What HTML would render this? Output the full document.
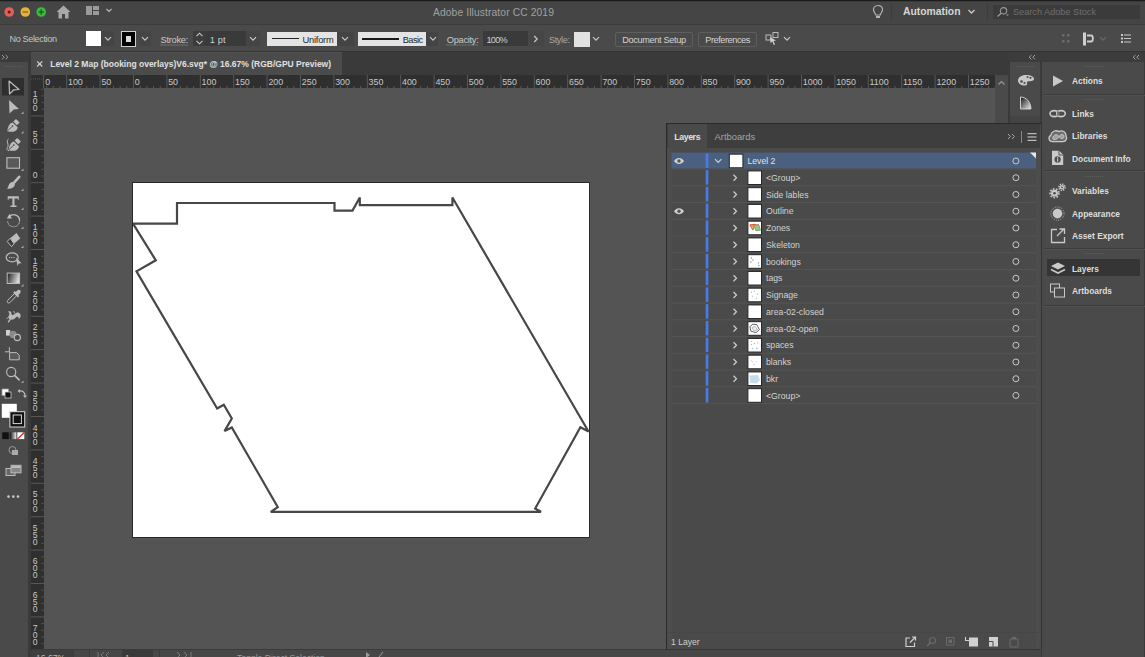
<!DOCTYPE html><html><head><meta charset="utf-8"><style>
*{margin:0;padding:0;box-sizing:border-box}
html,body{width:1145px;height:657px;overflow:hidden;background:#3b3b3b;font-family:"Liberation Sans",sans-serif}
#r{position:relative;width:1145px;height:657px;overflow:hidden}
#r div,#r svg{position:absolute}
</style></head><body><div id="r">
<div style="left:0px;top:0px;width:1145px;height:24px;background:#454545;"></div>
<div style="left:0px;top:0px;width:1145px;height:1px;background:#1c1c1c;"></div>
<div style="left:0px;top:1px;width:1145px;height:1px;background:#3a3a3a;"></div>
<div style="left:0px;top:23.5px;width:1145px;height:1px;background:#3c3c3c;"></div>
<svg style="left:0;top:0" width="60" height="24"><circle cx="9.2" cy="12" r="4.8" fill="#e2605a"/><circle cx="9.2" cy="12" r="1.6" fill="#6a1a18"/><circle cx="25.3" cy="12" r="4.8" fill="#e6b13e"/><rect x="22.6" y="11.4" width="5.4" height="1.2" fill="#8a5a10"/><circle cx="41.2" cy="12" r="4.8" fill="#3cba3f"/><rect x="38.5" y="11.4" width="5.4" height="1.2" fill="#0f5a12"/><rect x="40.6" y="9.3" width="1.2" height="5.4" fill="#0f5a12"/></svg>
<svg style="left:55px;top:4px" width="18" height="16"><path d="M1.5 8 L8.5 1.5 L15.5 8 L13.5 8 L13.5 14.5 L10 14.5 L10 10 L7 10 L7 14.5 L3.5 14.5 L3.5 8 Z" fill="#a8a8a8"/></svg>
<svg style="left:85px;top:5px" width="30" height="12"><rect x="1" y="1" width="6" height="9" fill="#9a9a9a"/><rect x="8" y="1" width="6" height="4" fill="#9a9a9a"/><rect x="8" y="6" width="6" height="4" fill="#9a9a9a"/><path d="M21.5 4 L24 6.5 L26.5 4" stroke="#bbb" stroke-width="1.1" fill="none"/></svg>
<svg style="left:871px;top:4px" width="14" height="16"><path d="M7 1.5 C4 1.5 2.5 3.6 2.5 5.8 C2.5 8 4.3 9.2 4.8 11 L9.2 11 C9.7 9.2 11.5 8 11.5 5.8 C11.5 3.6 10 1.5 7 1.5 Z" stroke="#b5b5b5" stroke-width="1.2" fill="none"/><rect x="5" y="12" width="4" height="2" fill="#b5b5b5"/></svg>
<div style="left:891px;top:3px;width:1px;height:18px;background:#3d3d3d;"></div>
<svg style="left:967px;top:8px" width="10" height="8"><path d="M1.5 2 L4.5 5 L7.5 2" stroke="#ccc" stroke-width="1.3" fill="none"/></svg>
<div style="left:987px;top:3px;width:1px;height:18px;background:#3d3d3d;"></div>
<div style="left:993px;top:5px;width:147px;height:14px;background:#3b3b3b;"></div>
<svg style="left:995px;top:6px" width="16" height="12"><circle cx="8.5" cy="4.8" r="3.2" stroke="#9a9a9a" stroke-width="1.1" fill="none"/><path d="M6.2 7.2 L2.5 10.5" stroke="#9a9a9a" stroke-width="1.3"/><path d="M11 8.5 L14 8.5 L12.5 10 Z" fill="#9a9a9a"/></svg>
<div style="left:0px;top:24.5px;width:1145px;height:27.5px;background:#4a4a4a;"></div>
<div style="left:0px;top:51px;width:1145px;height:1px;background:#343434;"></div>
<div style="left:86px;top:31px;width:15px;height:15px;background:#ffffff;"></div>
<div style="left:101px;top:31px;width:13px;height:15px;background:#454545;"></div>
<svg style="left:104px;top:35.8px" width="8" height="6"><path d="M1 1.2 L4 4.2 L7 1.2" stroke="#c8c8c8" stroke-width="1.2" fill="none"/></svg>
<div style="left:120.5px;top:31px;width:15.5px;height:15.5px;background:#000;border:1px solid #d0d0d0"></div>
<div style="left:125.5px;top:36px;width:5.5px;height:5.5px;background:#ddd;"></div>
<div style="left:138.5px;top:31px;width:12px;height:15px;background:#454545;"></div>
<svg style="left:140.5px;top:35.8px" width="8" height="6"><path d="M1 1.2 L4 4.2 L7 1.2" stroke="#c8c8c8" stroke-width="1.2" fill="none"/></svg>
<svg style="left:160px;top:43.5px" width="30" height="2"><path d="M0.5 1 H28" stroke="#9a9a9a" stroke-width="1" stroke-dasharray="1 1"/></svg>
<div style="left:193px;top:31px;width:12.5px;height:15px;background:#3c3c3c;"></div>
<svg style="left:195px;top:31px" width="9" height="15"><path d="M1.5 5.2 L4.5 2.2 L7.5 5.2 M1.5 9.8 L4.5 12.8 L7.5 9.8" stroke="#c8c8c8" stroke-width="1.1" fill="none"/></svg>
<div style="left:205.5px;top:31px;width:40px;height:15px;background:#3a3a3a;"></div>
<div style="left:245.5px;top:31px;width:14.5px;height:15px;background:#454545;"></div>
<svg style="left:249px;top:35.8px" width="8" height="6"><path d="M1 1.2 L4 4.2 L7 1.2" stroke="#c8c8c8" stroke-width="1.2" fill="none"/></svg>
<div style="left:266.6px;top:31.5px;width:70.7px;height:14.5px;background:#e4e4e4;"></div>
<div style="left:271.8px;top:38.3px;width:27px;height:1px;background:#222;"></div>
<div style="left:337.3px;top:31.5px;width:17px;height:14.5px;background:#444;"></div>
<svg style="left:341px;top:35.8px" width="8" height="6"><path d="M1 1.2 L4 4.2 L7 1.2" stroke="#c8c8c8" stroke-width="1.2" fill="none"/></svg>
<div style="left:357.8px;top:31.5px;width:68px;height:14.5px;background:#e4e4e4;"></div>
<div style="left:361.7px;top:37.8px;width:37.2px;height:2px;background:#1a1a1a;"></div>
<div style="left:426px;top:31.5px;width:12px;height:14.5px;background:#444;"></div>
<svg style="left:429px;top:35.8px" width="8" height="6"><path d="M1 1.2 L4 4.2 L7 1.2" stroke="#c8c8c8" stroke-width="1.2" fill="none"/></svg>
<svg style="left:446px;top:43.5px" width="34" height="2"><path d="M0.5 1 H32.5" stroke="#9a9a9a" stroke-width="1" stroke-dasharray="1 1"/></svg>
<div style="left:483.3px;top:31px;width:45.2px;height:15px;background:#3a3a3a;"></div>
<div style="left:528.5px;top:31px;width:15px;height:15px;background:#464646;"></div>
<svg style="left:533px;top:35px" width="6" height="8"><path d="M1.2 1 L4.2 4 L1.2 7" stroke="#c8c8c8" stroke-width="1.2" fill="none"/></svg>
<div style="left:573.8px;top:31.5px;width:16.2px;height:15.5px;background:#e2e2e2;"></div>
<svg style="left:592.4px;top:35.8px" width="8" height="6"><path d="M1 1.2 L4 4.2 L7 1.2" stroke="#c8c8c8" stroke-width="1.2" fill="none"/></svg>
<div style="left:614.8px;top:31.5px;width:78.5px;height:15.5px;background:#4a4a4a;border:1px solid #5e5e5e;border-radius:2px"></div>
<div style="left:698.2px;top:31.5px;width:58.8px;height:15.5px;background:#4a4a4a;border:1px solid #5e5e5e;border-radius:2px"></div>
<svg style="left:765px;top:31px" width="16" height="15"><rect x="1" y="4" width="5" height="5" stroke="#bbb" fill="none"/><rect x="8" y="1.5" width="5" height="5" stroke="#bbb" fill="none"/><path d="M5 6 L11 9.5 L8.5 10 L10 13.5 L8.8 14 L7.4 10.6 L5.5 12 Z" fill="#d0d0d0"/></svg>
<svg style="left:783px;top:35.8px" width="8" height="6"><path d="M1 1.2 L4 4.2 L7 1.2" stroke="#c8c8c8" stroke-width="1.2" fill="none"/></svg>
<svg style="left:1061px;top:33px" width="10" height="11"><rect x="1" y="1" width="2.5" height="2.5" fill="#6a6a6a"/><rect x="6" y="1" width="2.5" height="2.5" fill="#6a6a6a"/><rect x="1" y="7" width="2.5" height="2.5" fill="#6a6a6a"/><rect x="6" y="7" width="2.5" height="2.5" fill="#6a6a6a"/></svg>
<svg style="left:1081px;top:31px" width="16" height="16"><rect x="2" y="1.5" width="3" height="13" fill="#cfcfcf"/><path d="M6 4.5 L10 4.5 C12.5 4.5 12.5 10.5 10 10.5 L6 10.5" stroke="#cfcfcf" stroke-width="1.8" fill="none"/></svg>
<svg style="left:1099px;top:36.3px" width="8" height="6"><path d="M1 1.2 L4 4.2 L7 1.2" stroke="#6a6a6a" stroke-width="1.2" fill="none"/></svg>
<svg style="left:1120px;top:33px" width="12" height="12"><rect x="1" y="1" width="2" height="2" fill="#c8c8c8"/><rect x="4" y="1.5" width="7" height="1" fill="#c8c8c8"/><rect x="1" y="4.5" width="2" height="2" fill="#c8c8c8"/><rect x="4" y="5" width="7" height="1" fill="#c8c8c8"/><rect x="1" y="8" width="2" height="2" fill="#c8c8c8"/><rect x="4" y="8.5" width="7" height="1" fill="#c8c8c8"/></svg>
<div style="left:0px;top:52px;width:1145px;height:605px;background:#3a3a3a;"></div>
<div style="left:0px;top:52px;width:28px;height:10px;background:#3b3b3b;"></div>
<svg style="left:1px;top:54px" width="10" height="7"><path d="M1 1 L3.2 3.2 L1 5.4 M4.6 1 L6.8 3.2 L4.6 5.4" stroke="#a0a0a0" stroke-width="1" fill="none"/></svg>
<div style="left:0px;top:62px;width:28px;height:595px;background:#4a4a4a;"></div>
<div style="left:28px;top:52px;width:3px;height:605px;background:#3a3a3a;"></div>
<svg style="left:5px;top:65px" width="17" height="3"><path d="M0 1.5 H17" stroke="#5e5e5e" stroke-width="1" stroke-dasharray="1 1"/></svg>
<svg style="left:0;top:0" width="28" height="657"><rect x="2" y="78" width="22" height="17.5" fill="#2e2e2e"/><path d="M9 81 L19 89.5 L13.8 89.8 L9.5 94 Z" fill="none" stroke="#bcbcbc" stroke-width="1.2" stroke-linejoin="round"/><path d="M9 100 L19 109 L13.8 109.6 L9.5 113.5 Z" fill="#bcbcbc"/><path d="M21 114 L23.5 111.5 L23.5 114 Z" fill="#aaa"/><g transform="translate(0,0)"><path d="M13.3 121.6 L16 118.9 L19.6 122.5 L16.9 125.2 Z" fill="#bcbcbc"/><path d="M7.2 131.3 C7.8 128 8.6 125.5 10.3 123.6 L12.6 122.4 L17.8 127.6 L16.6 129.9 C14.7 131.6 12.2 132.4 7.2 131.3 Z" fill="#bcbcbc"/><path d="M7.6 130.9 L11.6 126.9" stroke="#4a4a4a" stroke-width="0.9"/><circle cx="12.4" cy="126.1" r="0.9" fill="#4a4a4a"/></g><path d="M21 133.5 L23.5 131.0 L23.5 133.5 Z" fill="#aaa"/><g transform="translate(1.3,19)"><path d="M13.3 121.6 L16 118.9 L19.6 122.5 L16.9 125.2 Z" fill="#bcbcbc"/><path d="M7.2 131.3 C7.8 128 8.6 125.5 10.3 123.6 L12.6 122.4 L17.8 127.6 L16.6 129.9 C14.7 131.6 12.2 132.4 7.2 131.3 Z" fill="#bcbcbc"/><path d="M7.6 130.9 L11.6 126.9" stroke="#4a4a4a" stroke-width="0.9"/><circle cx="12.4" cy="126.1" r="0.9" fill="#4a4a4a"/></g><path d="M8.5 139 C5.5 141 9.5 144.5 7.5 147.5 C6.5 149 7 150.5 9 150.5" stroke="#bcbcbc" stroke-width="1" fill="none"/><rect x="6.9" y="157.7" width="12.6" height="10.5" fill="#5a5a5a" stroke="#bcbcbc" stroke-width="1.1"/><path d="M21 171 L23.5 168.5 L23.5 171 Z" fill="#aaa"/><path d="M19.2 176.8 L14.3 182.3" stroke="#bcbcbc" stroke-width="2.6" stroke-linecap="round"/><path d="M13.6 182 C11 181.6 9.2 183.4 8.7 185.3 C8.3 186.8 7.8 187.9 7 188.8 C10 188.9 12.9 188.1 14.3 186.2 C15.3 184.8 15.1 182.9 13.6 182 Z" fill="#bcbcbc"/><path d="M21 191 L23.5 188.5 L23.5 191 Z" fill="#aaa"/><path d="M7.7 196.3 H18.8 V199.8 H17.8 V198.4 H14.5 V205.5 H16.5 V207 H10.5 V205.5 H12.4 V198.4 H8.7 V199.8 H7.7 Z" fill="#bcbcbc"/><path d="M21 210 L23.5 207.5 L23.5 210 Z" fill="#aaa"/><path d="M9.3 216.5 A6 6 0 0 1 19.6 220.5" fill="none" stroke="#bcbcbc" stroke-width="1.4"/><path d="M19.6 220.5 A6 6 0 0 1 7.6 221" fill="none" stroke="#bcbcbc" stroke-width="1.1" stroke-dasharray="1.2 0.9"/><path d="M6.8 218.6 L9.6 213.8 L11.8 218.4 Z" fill="#bcbcbc"/><path d="M21 229 L23.5 226.5 L23.5 229 Z" fill="#aaa"/><path d="M10.2 238.2 L16.5 233 L20.2 238.6 L14 243.8 Z" fill="#bcbcbc"/><path d="M10.2 238.2 L14 243.8 L11.6 246.6 L7.2 241.5 Z" fill="#3a3a3a" stroke="#bcbcbc" stroke-width="1"/><path d="M21 248 L23.5 245.5 L23.5 248 Z" fill="#aaa"/><ellipse cx="12.2" cy="257.4" rx="6" ry="4.5" fill="none" stroke="#bcbcbc" stroke-width="1.2"/><path d="M9 257.6 H15" stroke="#bcbcbc" stroke-width="1" stroke-dasharray="1 0.8"/><path d="M16 257.5 L21.5 263.2 L18.7 263.4 L17.4 266 Z" fill="#bcbcbc"/><defs><linearGradient id="g1" x1="0" y1="0" x2="1" y2="0.3"><stop offset="0" stop-color="#1a1a1a"/><stop offset="1" stop-color="#d8d8d8"/></linearGradient><linearGradient id="g2" x1="0" y1="0" x2="1" y2="0"><stop offset="0" stop-color="#111"/><stop offset="1" stop-color="#eee"/></linearGradient></defs><rect x="7.2" y="273.1" width="12.4" height="10.4" fill="url(#g1)" stroke="#bcbcbc" stroke-width="1"/><path d="M21 286.5 L23.5 284.0 L23.5 286.5 Z" fill="#aaa"/><path d="M7.6 302.6 C7 301.5 7.3 300.8 8 300 L14.4 293.6 L16.6 295.8 L10.2 302.2 C9.4 302.9 8.6 303.2 7.6 302.6 Z" fill="none" stroke="#bcbcbc" stroke-width="1"/><path d="M13.2 292.5 L14.6 291.1 L15.6 292.1 L17.2 290.5 C18.2 289.5 19.8 289.6 20.4 290.6 C21 291.5 20.8 292.8 19.9 293.6 L18.4 295.1 L19.3 296 L17.9 297.4 Z" fill="#bcbcbc"/><path d="M8 311.5 C9.8 310.6 11.6 311.4 11.4 313.2 C11.2 314.6 12.6 315.6 14 314.6 L16.2 313 C18.4 311.8 20.8 313.4 20.6 316 C20.4 317.6 19.6 318.8 18.4 318.6 C18.8 316.6 17.6 315.8 16.4 317 C14.8 318.8 13 320 11 319.6 L8.6 322.8 L7.6 322 L9.6 319 C8.4 318 8 316.4 9 315.2 C9.8 314.2 9.6 312.8 8 311.5 Z" fill="#bcbcbc"/><path d="M13.5 311 L15 313.5 M6.5 318.5 L12 316" stroke="#bcbcbc" stroke-width="0.9"/><rect x="6" y="330" width="4.2" height="5.6" fill="#d0d0d0"/><circle cx="13" cy="334.4" r="3.6" fill="#8a8a8a"/><circle cx="17.3" cy="337.5" r="3.1" fill="#4a4a4a" stroke="#bcbcbc" stroke-width="1.2"/><path d="M9.6 352.6 H16.6 L19.2 355.2 V359.8 H9.6 Z" fill="#5a5a5a" stroke="#bcbcbc" stroke-width="1"/><path d="M9.4 347.2 V352 M5 351.8 H9.6" stroke="#bcbcbc" stroke-width="1"/><circle cx="11.2" cy="372" r="4.6" fill="none" stroke="#bcbcbc" stroke-width="1.1"/><path d="M14.6 375.4 L19.6 380.4" stroke="#bcbcbc" stroke-width="1.6"/><path d="M21 383 L23.5 380.5 L23.5 383 Z" fill="#aaa"/><rect x="2" y="389" width="6.5" height="6.5" fill="#fff" stroke="#999" stroke-width="0.8"/><rect x="5" y="392" width="6" height="6" fill="#111" stroke="#ccc" stroke-width="0.8"/><path d="M19 391 C23 390.5 25 392.5 25 396" stroke="#bcbcbc" stroke-width="1.1" fill="none"/><path d="M17.5 391 L20 389 L20 393 Z M23 395.5 L27 395.5 L25 398 Z" fill="#bcbcbc"/><rect x="1.8" y="403.8" width="15" height="14" fill="#fff"/><rect x="9.9" y="411.7" width="14.8" height="15.3" fill="#111" stroke="#d8d8d8" stroke-width="1"/><rect x="13.2" y="415" width="8.2" height="8.6" fill="none" stroke="#d8d8d8" stroke-width="1"/><rect x="2.3" y="432.3" width="6.5" height="6.8" fill="#111"/><rect x="9.8" y="432.3" width="6.5" height="6.8" fill="url(#g2)"/><rect x="17.3" y="432.3" width="7" height="6.8" fill="#fff"/><path d="M17.5 439 L24.2 432.5" stroke="#e02020" stroke-width="1.3"/><circle cx="12.5" cy="450" r="3.5" fill="none" stroke="#999" stroke-width="1"/><rect x="12" y="450" width="6" height="5" fill="#aaa"/><rect x="6" y="468.5" width="9" height="7" fill="#666" stroke="#bcbcbc" stroke-width="1"/><rect x="11" y="465.3" width="10" height="7.5" fill="#888" stroke="#bcbcbc" stroke-width="1"/><rect x="11.5" y="466" width="9" height="2" fill="#bcbcbc"/><circle cx="8.5" cy="496.6" r="1.3" fill="#c8c8c8"/><circle cx="13.3" cy="496.6" r="1.3" fill="#c8c8c8"/><circle cx="18" cy="496.6" r="1.3" fill="#c8c8c8"/></svg>
<div style="left:31px;top:52.4px;width:311px;height:22.2px;background:#4b4b4b;border-top:1px solid #525252"></div>
<svg style="left:36px;top:60px" width="8" height="8"><path d="M1.1 1.3 L6.3 6.5 M6.3 1.3 L1.1 6.5" stroke="#d8d8d8" stroke-width="1.1"/></svg>
<div style="left:31px;top:75px;width:964px;height:13px;background:#2f2f2f;"></div>
<div style="left:31px;top:88px;width:13px;height:561px;background:#2f2f2f;"></div>
<svg style="left:31px;top:75px" width="964" height="13" font-family="Liberation Sans, sans-serif"><rect x="1.80" y="0" width="1" height="13" fill="#575757"/><text x="14.20" y="10" font-size="8.9" fill="#c9c9c9">0</text><rect x="8.48" y="11" width="1" height="2" fill="#5a5a5a"/><rect x="15.16" y="11" width="1" height="2" fill="#5a5a5a"/><rect x="21.84" y="11" width="1" height="2" fill="#5a5a5a"/><rect x="28.52" y="11" width="1" height="2" fill="#5a5a5a"/><rect x="35.20" y="0" width="1" height="13" fill="#575757"/><text x="37.00" y="10" font-size="8.9" fill="#c9c9c9">100</text><rect x="41.88" y="11" width="1" height="2" fill="#5a5a5a"/><rect x="48.56" y="11" width="1" height="2" fill="#5a5a5a"/><rect x="55.24" y="11" width="1" height="2" fill="#5a5a5a"/><rect x="61.92" y="11" width="1" height="2" fill="#5a5a5a"/><rect x="68.60" y="0" width="1" height="13" fill="#575757"/><text x="70.40" y="10" font-size="8.9" fill="#c9c9c9">50</text><rect x="75.28" y="11" width="1" height="2" fill="#5a5a5a"/><rect x="81.96" y="11" width="1" height="2" fill="#5a5a5a"/><rect x="88.64" y="11" width="1" height="2" fill="#5a5a5a"/><rect x="95.32" y="11" width="1" height="2" fill="#5a5a5a"/><rect x="102.00" y="0" width="1" height="13" fill="#575757"/><text x="103.80" y="10" font-size="8.9" fill="#c9c9c9">0</text><rect x="108.68" y="11" width="1" height="2" fill="#5a5a5a"/><rect x="115.36" y="11" width="1" height="2" fill="#5a5a5a"/><rect x="122.04" y="11" width="1" height="2" fill="#5a5a5a"/><rect x="128.72" y="11" width="1" height="2" fill="#5a5a5a"/><rect x="135.40" y="0" width="1" height="13" fill="#575757"/><text x="137.20" y="10" font-size="8.9" fill="#c9c9c9">50</text><rect x="142.08" y="11" width="1" height="2" fill="#5a5a5a"/><rect x="148.76" y="11" width="1" height="2" fill="#5a5a5a"/><rect x="155.44" y="11" width="1" height="2" fill="#5a5a5a"/><rect x="162.12" y="11" width="1" height="2" fill="#5a5a5a"/><rect x="168.80" y="0" width="1" height="13" fill="#575757"/><text x="170.60" y="10" font-size="8.9" fill="#c9c9c9">100</text><rect x="175.48" y="11" width="1" height="2" fill="#5a5a5a"/><rect x="182.16" y="11" width="1" height="2" fill="#5a5a5a"/><rect x="188.84" y="11" width="1" height="2" fill="#5a5a5a"/><rect x="195.52" y="11" width="1" height="2" fill="#5a5a5a"/><rect x="202.20" y="0" width="1" height="13" fill="#575757"/><text x="204.00" y="10" font-size="8.9" fill="#c9c9c9">150</text><rect x="208.88" y="11" width="1" height="2" fill="#5a5a5a"/><rect x="215.56" y="11" width="1" height="2" fill="#5a5a5a"/><rect x="222.24" y="11" width="1" height="2" fill="#5a5a5a"/><rect x="228.92" y="11" width="1" height="2" fill="#5a5a5a"/><rect x="235.60" y="0" width="1" height="13" fill="#575757"/><text x="237.40" y="10" font-size="8.9" fill="#c9c9c9">200</text><rect x="242.28" y="11" width="1" height="2" fill="#5a5a5a"/><rect x="248.96" y="11" width="1" height="2" fill="#5a5a5a"/><rect x="255.64" y="11" width="1" height="2" fill="#5a5a5a"/><rect x="262.32" y="11" width="1" height="2" fill="#5a5a5a"/><rect x="269.00" y="0" width="1" height="13" fill="#575757"/><text x="270.80" y="10" font-size="8.9" fill="#c9c9c9">250</text><rect x="275.68" y="11" width="1" height="2" fill="#5a5a5a"/><rect x="282.36" y="11" width="1" height="2" fill="#5a5a5a"/><rect x="289.04" y="11" width="1" height="2" fill="#5a5a5a"/><rect x="295.72" y="11" width="1" height="2" fill="#5a5a5a"/><rect x="302.40" y="0" width="1" height="13" fill="#575757"/><text x="304.20" y="10" font-size="8.9" fill="#c9c9c9">300</text><rect x="309.08" y="11" width="1" height="2" fill="#5a5a5a"/><rect x="315.76" y="11" width="1" height="2" fill="#5a5a5a"/><rect x="322.44" y="11" width="1" height="2" fill="#5a5a5a"/><rect x="329.12" y="11" width="1" height="2" fill="#5a5a5a"/><rect x="335.80" y="0" width="1" height="13" fill="#575757"/><text x="337.60" y="10" font-size="8.9" fill="#c9c9c9">350</text><rect x="342.48" y="11" width="1" height="2" fill="#5a5a5a"/><rect x="349.16" y="11" width="1" height="2" fill="#5a5a5a"/><rect x="355.84" y="11" width="1" height="2" fill="#5a5a5a"/><rect x="362.52" y="11" width="1" height="2" fill="#5a5a5a"/><rect x="369.20" y="0" width="1" height="13" fill="#575757"/><text x="371.00" y="10" font-size="8.9" fill="#c9c9c9">400</text><rect x="375.88" y="11" width="1" height="2" fill="#5a5a5a"/><rect x="382.56" y="11" width="1" height="2" fill="#5a5a5a"/><rect x="389.24" y="11" width="1" height="2" fill="#5a5a5a"/><rect x="395.92" y="11" width="1" height="2" fill="#5a5a5a"/><rect x="402.60" y="0" width="1" height="13" fill="#575757"/><text x="404.40" y="10" font-size="8.9" fill="#c9c9c9">450</text><rect x="409.28" y="11" width="1" height="2" fill="#5a5a5a"/><rect x="415.96" y="11" width="1" height="2" fill="#5a5a5a"/><rect x="422.64" y="11" width="1" height="2" fill="#5a5a5a"/><rect x="429.32" y="11" width="1" height="2" fill="#5a5a5a"/><rect x="436.00" y="0" width="1" height="13" fill="#575757"/><text x="437.80" y="10" font-size="8.9" fill="#c9c9c9">500</text><rect x="442.68" y="11" width="1" height="2" fill="#5a5a5a"/><rect x="449.36" y="11" width="1" height="2" fill="#5a5a5a"/><rect x="456.04" y="11" width="1" height="2" fill="#5a5a5a"/><rect x="462.72" y="11" width="1" height="2" fill="#5a5a5a"/><rect x="469.40" y="0" width="1" height="13" fill="#575757"/><text x="471.20" y="10" font-size="8.9" fill="#c9c9c9">550</text><rect x="476.08" y="11" width="1" height="2" fill="#5a5a5a"/><rect x="482.76" y="11" width="1" height="2" fill="#5a5a5a"/><rect x="489.44" y="11" width="1" height="2" fill="#5a5a5a"/><rect x="496.12" y="11" width="1" height="2" fill="#5a5a5a"/><rect x="502.80" y="0" width="1" height="13" fill="#575757"/><text x="504.60" y="10" font-size="8.9" fill="#c9c9c9">600</text><rect x="509.48" y="11" width="1" height="2" fill="#5a5a5a"/><rect x="516.16" y="11" width="1" height="2" fill="#5a5a5a"/><rect x="522.84" y="11" width="1" height="2" fill="#5a5a5a"/><rect x="529.52" y="11" width="1" height="2" fill="#5a5a5a"/><rect x="536.20" y="0" width="1" height="13" fill="#575757"/><text x="538.00" y="10" font-size="8.9" fill="#c9c9c9">650</text><rect x="542.88" y="11" width="1" height="2" fill="#5a5a5a"/><rect x="549.56" y="11" width="1" height="2" fill="#5a5a5a"/><rect x="556.24" y="11" width="1" height="2" fill="#5a5a5a"/><rect x="562.92" y="11" width="1" height="2" fill="#5a5a5a"/><rect x="569.60" y="0" width="1" height="13" fill="#575757"/><text x="571.40" y="10" font-size="8.9" fill="#c9c9c9">700</text><rect x="576.28" y="11" width="1" height="2" fill="#5a5a5a"/><rect x="582.96" y="11" width="1" height="2" fill="#5a5a5a"/><rect x="589.64" y="11" width="1" height="2" fill="#5a5a5a"/><rect x="596.32" y="11" width="1" height="2" fill="#5a5a5a"/><rect x="603.00" y="0" width="1" height="13" fill="#575757"/><text x="604.80" y="10" font-size="8.9" fill="#c9c9c9">750</text><rect x="609.68" y="11" width="1" height="2" fill="#5a5a5a"/><rect x="616.36" y="11" width="1" height="2" fill="#5a5a5a"/><rect x="623.04" y="11" width="1" height="2" fill="#5a5a5a"/><rect x="629.72" y="11" width="1" height="2" fill="#5a5a5a"/><rect x="636.40" y="0" width="1" height="13" fill="#575757"/><text x="638.20" y="10" font-size="8.9" fill="#c9c9c9">800</text><rect x="643.08" y="11" width="1" height="2" fill="#5a5a5a"/><rect x="649.76" y="11" width="1" height="2" fill="#5a5a5a"/><rect x="656.44" y="11" width="1" height="2" fill="#5a5a5a"/><rect x="663.12" y="11" width="1" height="2" fill="#5a5a5a"/><rect x="669.80" y="0" width="1" height="13" fill="#575757"/><text x="671.60" y="10" font-size="8.9" fill="#c9c9c9">850</text><rect x="676.48" y="11" width="1" height="2" fill="#5a5a5a"/><rect x="683.16" y="11" width="1" height="2" fill="#5a5a5a"/><rect x="689.84" y="11" width="1" height="2" fill="#5a5a5a"/><rect x="696.52" y="11" width="1" height="2" fill="#5a5a5a"/><rect x="703.20" y="0" width="1" height="13" fill="#575757"/><text x="705.00" y="10" font-size="8.9" fill="#c9c9c9">900</text><rect x="709.88" y="11" width="1" height="2" fill="#5a5a5a"/><rect x="716.56" y="11" width="1" height="2" fill="#5a5a5a"/><rect x="723.24" y="11" width="1" height="2" fill="#5a5a5a"/><rect x="729.92" y="11" width="1" height="2" fill="#5a5a5a"/><rect x="736.60" y="0" width="1" height="13" fill="#575757"/><text x="738.40" y="10" font-size="8.9" fill="#c9c9c9">950</text><rect x="743.28" y="11" width="1" height="2" fill="#5a5a5a"/><rect x="749.96" y="11" width="1" height="2" fill="#5a5a5a"/><rect x="756.64" y="11" width="1" height="2" fill="#5a5a5a"/><rect x="763.32" y="11" width="1" height="2" fill="#5a5a5a"/><rect x="770.00" y="0" width="1" height="13" fill="#575757"/><text x="771.80" y="10" font-size="8.9" fill="#c9c9c9">1000</text><rect x="776.68" y="11" width="1" height="2" fill="#5a5a5a"/><rect x="783.36" y="11" width="1" height="2" fill="#5a5a5a"/><rect x="790.04" y="11" width="1" height="2" fill="#5a5a5a"/><rect x="796.72" y="11" width="1" height="2" fill="#5a5a5a"/><rect x="803.40" y="0" width="1" height="13" fill="#575757"/><text x="805.20" y="10" font-size="8.9" fill="#c9c9c9">1050</text><rect x="810.08" y="11" width="1" height="2" fill="#5a5a5a"/><rect x="816.76" y="11" width="1" height="2" fill="#5a5a5a"/><rect x="823.44" y="11" width="1" height="2" fill="#5a5a5a"/><rect x="830.12" y="11" width="1" height="2" fill="#5a5a5a"/><rect x="836.80" y="0" width="1" height="13" fill="#575757"/><text x="838.60" y="10" font-size="8.9" fill="#c9c9c9">1100</text><rect x="843.48" y="11" width="1" height="2" fill="#5a5a5a"/><rect x="850.16" y="11" width="1" height="2" fill="#5a5a5a"/><rect x="856.84" y="11" width="1" height="2" fill="#5a5a5a"/><rect x="863.52" y="11" width="1" height="2" fill="#5a5a5a"/><rect x="870.20" y="0" width="1" height="13" fill="#575757"/><text x="872.00" y="10" font-size="8.9" fill="#c9c9c9">1150</text><rect x="876.88" y="11" width="1" height="2" fill="#5a5a5a"/><rect x="883.56" y="11" width="1" height="2" fill="#5a5a5a"/><rect x="890.24" y="11" width="1" height="2" fill="#5a5a5a"/><rect x="896.92" y="11" width="1" height="2" fill="#5a5a5a"/><rect x="903.60" y="0" width="1" height="13" fill="#575757"/><text x="905.40" y="10" font-size="8.9" fill="#c9c9c9">1200</text><rect x="910.28" y="11" width="1" height="2" fill="#5a5a5a"/><rect x="916.96" y="11" width="1" height="2" fill="#5a5a5a"/><rect x="923.64" y="11" width="1" height="2" fill="#5a5a5a"/><rect x="930.32" y="11" width="1" height="2" fill="#5a5a5a"/><rect x="937.00" y="0" width="1" height="13" fill="#575757"/><text x="938.80" y="10" font-size="8.9" fill="#c9c9c9">1250</text><rect x="943.68" y="11" width="1" height="2" fill="#5a5a5a"/><rect x="950.36" y="11" width="1" height="2" fill="#5a5a5a"/><rect x="957.04" y="11" width="1" height="2" fill="#5a5a5a"/><rect x="963.72" y="11" width="1" height="2" fill="#5a5a5a"/></svg>
<svg style="left:31px;top:88px" width="13" height="561" font-family="Liberation Sans, sans-serif"><rect x="0" y="-6.00" width="13" height="1" fill="#575757"/><text x="1.8" y="-24.80" font-size="8.6" fill="#c9c9c9">1</text><text x="1.8" y="-17.70" font-size="8.6" fill="#c9c9c9">5</text><text x="1.8" y="-10.60" font-size="8.6" fill="#c9c9c9">0</text><rect x="10.5" y="0.68" width="2" height="1" fill="#5a5a5a"/><rect x="10.5" y="7.36" width="2" height="1" fill="#5a5a5a"/><rect x="10.5" y="14.04" width="2" height="1" fill="#5a5a5a"/><rect x="10.5" y="20.72" width="2" height="1" fill="#5a5a5a"/><rect x="0" y="27.40" width="13" height="1" fill="#575757"/><text x="1.8" y="8.60" font-size="8.6" fill="#c9c9c9">1</text><text x="1.8" y="15.70" font-size="8.6" fill="#c9c9c9">0</text><text x="1.8" y="22.80" font-size="8.6" fill="#c9c9c9">0</text><rect x="10.5" y="34.08" width="2" height="1" fill="#5a5a5a"/><rect x="10.5" y="40.76" width="2" height="1" fill="#5a5a5a"/><rect x="10.5" y="47.44" width="2" height="1" fill="#5a5a5a"/><rect x="10.5" y="54.12" width="2" height="1" fill="#5a5a5a"/><rect x="0" y="60.80" width="13" height="1" fill="#575757"/><text x="1.8" y="49.10" font-size="8.6" fill="#c9c9c9">5</text><text x="1.8" y="56.20" font-size="8.6" fill="#c9c9c9">0</text><rect x="10.5" y="67.48" width="2" height="1" fill="#5a5a5a"/><rect x="10.5" y="74.16" width="2" height="1" fill="#5a5a5a"/><rect x="10.5" y="80.84" width="2" height="1" fill="#5a5a5a"/><rect x="10.5" y="87.52" width="2" height="1" fill="#5a5a5a"/><rect x="0" y="94.20" width="13" height="1" fill="#575757"/><text x="1.8" y="89.60" font-size="8.6" fill="#c9c9c9">0</text><rect x="10.5" y="100.88" width="2" height="1" fill="#5a5a5a"/><rect x="10.5" y="107.56" width="2" height="1" fill="#5a5a5a"/><rect x="10.5" y="114.24" width="2" height="1" fill="#5a5a5a"/><rect x="10.5" y="120.92" width="2" height="1" fill="#5a5a5a"/><rect x="0" y="127.60" width="13" height="1" fill="#575757"/><text x="1.8" y="115.90" font-size="8.6" fill="#c9c9c9">5</text><text x="1.8" y="123.00" font-size="8.6" fill="#c9c9c9">0</text><rect x="10.5" y="134.28" width="2" height="1" fill="#5a5a5a"/><rect x="10.5" y="140.96" width="2" height="1" fill="#5a5a5a"/><rect x="10.5" y="147.64" width="2" height="1" fill="#5a5a5a"/><rect x="10.5" y="154.32" width="2" height="1" fill="#5a5a5a"/><rect x="0" y="161.00" width="13" height="1" fill="#575757"/><text x="1.8" y="142.20" font-size="8.6" fill="#c9c9c9">1</text><text x="1.8" y="149.30" font-size="8.6" fill="#c9c9c9">0</text><text x="1.8" y="156.40" font-size="8.6" fill="#c9c9c9">0</text><rect x="10.5" y="167.68" width="2" height="1" fill="#5a5a5a"/><rect x="10.5" y="174.36" width="2" height="1" fill="#5a5a5a"/><rect x="10.5" y="181.04" width="2" height="1" fill="#5a5a5a"/><rect x="10.5" y="187.72" width="2" height="1" fill="#5a5a5a"/><rect x="0" y="194.40" width="13" height="1" fill="#575757"/><text x="1.8" y="175.60" font-size="8.6" fill="#c9c9c9">1</text><text x="1.8" y="182.70" font-size="8.6" fill="#c9c9c9">5</text><text x="1.8" y="189.80" font-size="8.6" fill="#c9c9c9">0</text><rect x="10.5" y="201.08" width="2" height="1" fill="#5a5a5a"/><rect x="10.5" y="207.76" width="2" height="1" fill="#5a5a5a"/><rect x="10.5" y="214.44" width="2" height="1" fill="#5a5a5a"/><rect x="10.5" y="221.12" width="2" height="1" fill="#5a5a5a"/><rect x="0" y="227.80" width="13" height="1" fill="#575757"/><text x="1.8" y="209.00" font-size="8.6" fill="#c9c9c9">2</text><text x="1.8" y="216.10" font-size="8.6" fill="#c9c9c9">0</text><text x="1.8" y="223.20" font-size="8.6" fill="#c9c9c9">0</text><rect x="10.5" y="234.48" width="2" height="1" fill="#5a5a5a"/><rect x="10.5" y="241.16" width="2" height="1" fill="#5a5a5a"/><rect x="10.5" y="247.84" width="2" height="1" fill="#5a5a5a"/><rect x="10.5" y="254.52" width="2" height="1" fill="#5a5a5a"/><rect x="0" y="261.20" width="13" height="1" fill="#575757"/><text x="1.8" y="242.40" font-size="8.6" fill="#c9c9c9">2</text><text x="1.8" y="249.50" font-size="8.6" fill="#c9c9c9">5</text><text x="1.8" y="256.60" font-size="8.6" fill="#c9c9c9">0</text><rect x="10.5" y="267.88" width="2" height="1" fill="#5a5a5a"/><rect x="10.5" y="274.56" width="2" height="1" fill="#5a5a5a"/><rect x="10.5" y="281.24" width="2" height="1" fill="#5a5a5a"/><rect x="10.5" y="287.92" width="2" height="1" fill="#5a5a5a"/><rect x="0" y="294.60" width="13" height="1" fill="#575757"/><text x="1.8" y="275.80" font-size="8.6" fill="#c9c9c9">3</text><text x="1.8" y="282.90" font-size="8.6" fill="#c9c9c9">0</text><text x="1.8" y="290.00" font-size="8.6" fill="#c9c9c9">0</text><rect x="10.5" y="301.28" width="2" height="1" fill="#5a5a5a"/><rect x="10.5" y="307.96" width="2" height="1" fill="#5a5a5a"/><rect x="10.5" y="314.64" width="2" height="1" fill="#5a5a5a"/><rect x="10.5" y="321.32" width="2" height="1" fill="#5a5a5a"/><rect x="0" y="328.00" width="13" height="1" fill="#575757"/><text x="1.8" y="309.20" font-size="8.6" fill="#c9c9c9">3</text><text x="1.8" y="316.30" font-size="8.6" fill="#c9c9c9">5</text><text x="1.8" y="323.40" font-size="8.6" fill="#c9c9c9">0</text><rect x="10.5" y="334.68" width="2" height="1" fill="#5a5a5a"/><rect x="10.5" y="341.36" width="2" height="1" fill="#5a5a5a"/><rect x="10.5" y="348.04" width="2" height="1" fill="#5a5a5a"/><rect x="10.5" y="354.72" width="2" height="1" fill="#5a5a5a"/><rect x="0" y="361.40" width="13" height="1" fill="#575757"/><text x="1.8" y="342.60" font-size="8.6" fill="#c9c9c9">4</text><text x="1.8" y="349.70" font-size="8.6" fill="#c9c9c9">0</text><text x="1.8" y="356.80" font-size="8.6" fill="#c9c9c9">0</text><rect x="10.5" y="368.08" width="2" height="1" fill="#5a5a5a"/><rect x="10.5" y="374.76" width="2" height="1" fill="#5a5a5a"/><rect x="10.5" y="381.44" width="2" height="1" fill="#5a5a5a"/><rect x="10.5" y="388.12" width="2" height="1" fill="#5a5a5a"/><rect x="0" y="394.80" width="13" height="1" fill="#575757"/><text x="1.8" y="376.00" font-size="8.6" fill="#c9c9c9">4</text><text x="1.8" y="383.10" font-size="8.6" fill="#c9c9c9">5</text><text x="1.8" y="390.20" font-size="8.6" fill="#c9c9c9">0</text><rect x="10.5" y="401.48" width="2" height="1" fill="#5a5a5a"/><rect x="10.5" y="408.16" width="2" height="1" fill="#5a5a5a"/><rect x="10.5" y="414.84" width="2" height="1" fill="#5a5a5a"/><rect x="10.5" y="421.52" width="2" height="1" fill="#5a5a5a"/><rect x="0" y="428.20" width="13" height="1" fill="#575757"/><text x="1.8" y="409.40" font-size="8.6" fill="#c9c9c9">5</text><text x="1.8" y="416.50" font-size="8.6" fill="#c9c9c9">0</text><text x="1.8" y="423.60" font-size="8.6" fill="#c9c9c9">0</text><rect x="10.5" y="434.88" width="2" height="1" fill="#5a5a5a"/><rect x="10.5" y="441.56" width="2" height="1" fill="#5a5a5a"/><rect x="10.5" y="448.24" width="2" height="1" fill="#5a5a5a"/><rect x="10.5" y="454.92" width="2" height="1" fill="#5a5a5a"/><rect x="0" y="461.60" width="13" height="1" fill="#575757"/><text x="1.8" y="442.80" font-size="8.6" fill="#c9c9c9">5</text><text x="1.8" y="449.90" font-size="8.6" fill="#c9c9c9">5</text><text x="1.8" y="457.00" font-size="8.6" fill="#c9c9c9">0</text><rect x="10.5" y="468.28" width="2" height="1" fill="#5a5a5a"/><rect x="10.5" y="474.96" width="2" height="1" fill="#5a5a5a"/><rect x="10.5" y="481.64" width="2" height="1" fill="#5a5a5a"/><rect x="10.5" y="488.32" width="2" height="1" fill="#5a5a5a"/><rect x="0" y="495.00" width="13" height="1" fill="#575757"/><text x="1.8" y="476.20" font-size="8.6" fill="#c9c9c9">6</text><text x="1.8" y="483.30" font-size="8.6" fill="#c9c9c9">0</text><text x="1.8" y="490.40" font-size="8.6" fill="#c9c9c9">0</text><rect x="10.5" y="501.68" width="2" height="1" fill="#5a5a5a"/><rect x="10.5" y="508.36" width="2" height="1" fill="#5a5a5a"/><rect x="10.5" y="515.04" width="2" height="1" fill="#5a5a5a"/><rect x="10.5" y="521.72" width="2" height="1" fill="#5a5a5a"/><rect x="0" y="528.40" width="13" height="1" fill="#575757"/><text x="1.8" y="509.60" font-size="8.6" fill="#c9c9c9">6</text><text x="1.8" y="516.70" font-size="8.6" fill="#c9c9c9">5</text><text x="1.8" y="523.80" font-size="8.6" fill="#c9c9c9">0</text><rect x="10.5" y="535.08" width="2" height="1" fill="#5a5a5a"/><rect x="10.5" y="541.76" width="2" height="1" fill="#5a5a5a"/><rect x="10.5" y="548.44" width="2" height="1" fill="#5a5a5a"/><rect x="10.5" y="555.12" width="2" height="1" fill="#5a5a5a"/><rect x="0" y="561.80" width="13" height="1" fill="#575757"/><text x="1.8" y="543.00" font-size="8.6" fill="#c9c9c9">7</text><text x="1.8" y="550.10" font-size="8.6" fill="#c9c9c9">0</text><text x="1.8" y="557.20" font-size="8.6" fill="#c9c9c9">0</text><rect x="10.5" y="568.48" width="2" height="1" fill="#5a5a5a"/><rect x="10.5" y="575.16" width="2" height="1" fill="#5a5a5a"/><rect x="10.5" y="581.84" width="2" height="1" fill="#5a5a5a"/><rect x="10.5" y="588.52" width="2" height="1" fill="#5a5a5a"/><rect x="0" y="595.20" width="13" height="1" fill="#575757"/><text x="1.8" y="576.40" font-size="8.6" fill="#c9c9c9">7</text><text x="1.8" y="583.50" font-size="8.6" fill="#c9c9c9">5</text><text x="1.8" y="590.60" font-size="8.6" fill="#c9c9c9">0</text><rect x="10.5" y="601.88" width="2" height="1" fill="#5a5a5a"/><rect x="10.5" y="608.56" width="2" height="1" fill="#5a5a5a"/><rect x="10.5" y="615.24" width="2" height="1" fill="#5a5a5a"/><rect x="10.5" y="621.92" width="2" height="1" fill="#5a5a5a"/></svg>
<div style="left:31px;top:75px;width:13px;height:13px;background:#2f2f2f;"></div>
<div style="left:43px;top:75px;width:1px;height:13px;background:#575757;"></div>
<svg style="left:31px;top:78px" width="13" height="2"><path d="M0 1 H12" stroke="#555" stroke-width="1" stroke-dasharray="1 1"/></svg>
<div style="left:44px;top:88px;width:951px;height:561px;background:#545454;"></div>
<div style="left:995px;top:75px;width:13px;height:574px;background:#4a4a4a;"></div>
<svg style="left:997px;top:80px" width="10" height="6"><path d="M1.5 4.5 L4.5 1.5 L7.5 4.5" stroke="#9a9a9a" stroke-width="1.1" fill="none"/></svg>
<div style="left:31px;top:649px;width:964px;height:8px;background:#474747;"></div>
<div style="left:31px;top:649px;width:964px;height:1px;background:#3a3a3a;"></div>
<div style="left:31px;top:650px;width:42px;height:7px;background:#3f3f3f;"></div>
<div style="left:73px;top:650px;width:1px;height:7px;background:#3a3a3a;"></div>
<div style="left:89px;top:650px;width:1px;height:7px;background:#3a3a3a;"></div>
<svg style="left:95px;top:651px" width="110" height="6"><path d="M3 1 V6 M9 1 L6 4 L9 7 M14 1 L11 4 L14 7" stroke="#7a7a7a" stroke-width="1" fill="none"/><path d="M82 1 L85 4 L82 7 M89 1 L92 4 L89 7 M96 1 V6" stroke="#7a7a7a" stroke-width="1" fill="none"/></svg>
<div style="left:122px;top:650px;width:31px;height:7px;background:#3a3a3a;"></div>
<div style="left:159px;top:650px;width:1px;height:7px;background:#3a3a3a;"></div>
<svg style="left:364px;top:651px" width="24" height="6"><path d="M2 1 L6 4 L2 7 Z" fill="#9a9a9a"/><path d="M15 6 L19 1" stroke="#9a9a9a" stroke-width="1"/></svg>
<div style="left:133px;top:183px;width:456px;height:354px;background:#ffffff;box-shadow:0 0 0 1px #2a2a2a"></div>
<svg style="left:133px;top:183px" width="456" height="354"><path d="M0 40.6 H44 V20 H201.5 V27.6 H219.5 L226.8 14.5 V22.1 H319.4 V14.5 L455.5 248.5 L447.4 244.2 L402.2 325.5 L408 328.8 L408 328.8 H137.8 L144.8 324.1 L98.8 244.5 L91.5 248.1 L98.8 235.5 L90.8 221.8 L84.2 225.5 L3.5 88.4 L22.8 77.3 Z" fill="none" stroke="#474747" stroke-width="2.2" stroke-linejoin="miter" stroke-miterlimit="2.5"/></svg>
<div style="left:1008px;top:52px;width:137px;height:10px;background:#3c3c3c;"></div>
<svg style="left:1027px;top:54px" width="10" height="7"><path d="M4.4 1 L2.2 3.2 L4.4 5.4 M8 1 L5.8 3.2 L8 5.4" stroke="#a8a8a8" stroke-width="1" fill="none"/></svg>
<svg style="left:1131px;top:54px" width="10" height="7"><path d="M4.4 1 L2.2 3.2 L4.4 5.4 M8 1 L5.8 3.2 L8 5.4" stroke="#a8a8a8" stroke-width="1" fill="none"/></svg>
<div style="left:1010px;top:62px;width:30px;height:54px;background:#4a4a4a;"></div>
<div style="left:1010px;top:116px;width:30px;height:7px;background:#444;"></div>
<svg style="left:1016px;top:65px" width="18" height="3"><path d="M0 1.5 H18" stroke="#5c5c5c" stroke-width="1" stroke-dasharray="1 1"/></svg>
<svg style="left:1017px;top:74px" width="18" height="13"><path d="M9 1 C4 1 1 3.5 1 6.5 C1 9.5 4 11.5 8 11.5 C10 11.5 10.5 10 10 9 C9.5 8 10.5 7 12 7.2 C15 7.5 17 6.5 17 5 C17 2.5 13.5 1 9 1 Z" fill="#c8c8c8"/><circle cx="4.5" cy="7.5" r="1.3" fill="#4a4a4a"/><circle cx="7.5" cy="9" r="1.1" fill="#4a4a4a"/><circle cx="13.5" cy="3.8" r="1.1" fill="#4a4a4a"/><circle cx="10.5" cy="3" r="1" fill="#4a4a4a"/></svg>
<svg style="left:1019px;top:96px" width="13" height="14"><defs><linearGradient id="g3" x1="0" y1="0" x2="1" y2="1"><stop offset="0" stop-color="#111"/><stop offset="1" stop-color="#eee"/></linearGradient></defs><path d="M1.5 1 C7 1 12 6 12 13 L1.5 13 Z" fill="url(#g3)" stroke="#ccc" stroke-width="1"/></svg>
<div style="left:1042px;top:62px;width:103px;height:595px;background:#4a4a4a;"></div>
<div style="left:1144px;top:52px;width:1px;height:605px;background:#3a3a3a;"></div>
<svg style="left:1084px;top:65px" width="20" height="3"><path d="M0 1.5 H20" stroke="#5e5e5e" stroke-width="1" stroke-dasharray="1 1"/></svg>
<div style="left:1044px;top:93.5px;width:101px;height:1px;background:#3c3c3c;"></div>
<div style="left:1044px;top:94.5px;width:101px;height:1px;background:#525252;"></div>
<svg style="left:1084px;top:98px" width="20" height="3"><path d="M0 1.5 H20" stroke="#5e5e5e" stroke-width="1" stroke-dasharray="1 1"/></svg>
<div style="left:1044px;top:169.5px;width:101px;height:1px;background:#3c3c3c;"></div>
<div style="left:1044px;top:170.5px;width:101px;height:1px;background:#525252;"></div>
<svg style="left:1084px;top:175px" width="20" height="3"><path d="M0 1.5 H20" stroke="#5e5e5e" stroke-width="1" stroke-dasharray="1 1"/></svg>
<div style="left:1044px;top:247.5px;width:101px;height:1px;background:#3c3c3c;"></div>
<div style="left:1044px;top:248.5px;width:101px;height:1px;background:#525252;"></div>
<svg style="left:1084px;top:252px" width="20" height="3"><path d="M0 1.5 H20" stroke="#5e5e5e" stroke-width="1" stroke-dasharray="1 1"/></svg>
<div style="left:1044px;top:304.5px;width:101px;height:1px;background:#3c3c3c;"></div>
<div style="left:1044px;top:305.5px;width:101px;height:1px;background:#525252;"></div>
<div style="left:1046.8px;top:259.3px;width:93.2px;height:16.7px;background:#353535;"></div>
<svg style="left:0;top:0" width="1145" height="657"><path d="M1053 75.5 L1063 81 L1053 86.5 Z" fill="#c9c9c9"/><ellipse cx="1054.3" cy="113.6" rx="4.3" ry="3" fill="none" stroke="#c9c9c9" stroke-width="1.6"/><ellipse cx="1061" cy="113.6" rx="4.3" ry="3" fill="none" stroke="#c9c9c9" stroke-width="1.6"/><path d="M1057.5 111.5 C1058.5 112.5 1058.5 114.7 1057.5 115.7" stroke="#4b4b4b" stroke-width="1.2" fill="none"/><path d="M1052.5 141.6 C1048.6 141.6 1048 137 1050.8 135.4 C1051.3 131.4 1055.8 129.6 1059 131.6 C1061.8 129.8 1066 131.6 1066 135.8 C1067.4 138.2 1066 141.6 1063 141.6 Z" fill="#6a6a6a" stroke="#c9c9c9" stroke-width="1.3"/><path d="M1052.6 138.6 C1053 134.2 1057.4 133.6 1059.2 136.6 C1060.8 139.4 1063.8 139.4 1064 136.6 C1064 134 1061 133.2 1059.2 136.6 C1057.6 139.6 1053.4 140.6 1052.6 138.6 Z" fill="#a0a0a0" stroke="#c9c9c9" stroke-width="1"/><path d="M1052 150.7 H1059.2 L1063.2 154.7 V165.1 H1052 Z" fill="#c9c9c9"/><path d="M1059 150.4 V155 H1063.5" stroke="#4b4b4b" stroke-width="0.9" fill="none"/><circle cx="1057.6" cy="159.4" r="3.1" fill="#4b4b4b"/><rect x="1057" y="158.4" width="1.2" height="3.2" fill="#c9c9c9"/><rect x="1057" y="156.8" width="1.2" height="1" fill="#c9c9c9"/><circle cx="1054.5" cy="193.2" r="3.4" fill="#c9c9c9"/><circle cx="1054.5" cy="193.2" r="4.4" fill="none" stroke="#c9c9c9" stroke-width="1.8" stroke-dasharray="1.6 1.5"/><circle cx="1054.5" cy="193.2" r="1.3" fill="#4b4b4b"/><circle cx="1062" cy="187.3" r="2.3" fill="#c9c9c9"/><circle cx="1062" cy="187.3" r="3.1" fill="none" stroke="#c9c9c9" stroke-width="1.5" stroke-dasharray="1.3 1.1"/><circle cx="1062" cy="187.3" r="0.9" fill="#4b4b4b"/><circle cx="1057.5" cy="213.6" r="4.8" fill="#c9c9c9"/><circle cx="1057.5" cy="213.6" r="6.6" fill="none" stroke="#c9c9c9" stroke-width="0.8" stroke-dasharray="1 1.2"/><path d="M1057 229.5 H1051.5 V242.5 H1064.5 V237" fill="none" stroke="#c9c9c9" stroke-width="1.3"/><path d="M1057 236 L1064 229 M1059.5 229 H1064.5 V234" fill="none" stroke="#c9c9c9" stroke-width="1.3"/><path d="M1051 266 L1058 262.5 L1065 266 L1058 269.5 Z" fill="#c9c9c9"/><path d="M1051 269.5 L1058 273 L1065 269.5" fill="none" stroke="#c9c9c9" stroke-width="1.6"/><rect x="1050.5" y="284" width="9" height="8" fill="none" stroke="#c9c9c9" stroke-width="1"/><rect x="1054.5" y="288" width="10" height="9" fill="#4b4b4b" stroke="#c9c9c9" stroke-width="1"/></svg>
<div style="left:666px;top:123px;width:375px;height:527px;background:#4a4a4a;"></div>
<div style="left:666px;top:123px;width:1px;height:527px;background:#2a2a2a;"></div>
<div style="left:666px;top:123px;width:375px;height:1px;background:#2a2a2a;"></div>
<div style="left:1036px;top:148px;width:4.5px;height:502px;background:#4d4d4d;"></div>
<div style="left:1040.5px;top:123px;width:1.5px;height:527px;background:#333333;"></div>
<div style="left:667px;top:148px;width:5px;height:502px;background:#4d4d4d;"></div>
<div style="left:667px;top:124px;width:373px;height:24px;background:#3e3e3e;"></div>
<div style="left:668px;top:124px;width:39px;height:24px;background:#4a4a4a;"></div>
<svg style="left:1007px;top:133px" width="10" height="8"><path d="M1 1 L3.4 3.5 L1 6 M5 1 L7.4 3.5 L5 6" stroke="#a8a8a8" stroke-width="1" fill="none"/></svg>
<div style="left:1021px;top:131px;width:1px;height:12px;background:#8a8a8a;"></div>
<svg style="left:1027px;top:131px" width="10" height="12"><rect x="0.5" y="2" width="9" height="1.2" fill="#bdbdbd"/><rect x="0.5" y="5.4" width="9" height="1.2" fill="#bdbdbd"/><rect x="0.5" y="8.8" width="9" height="1.2" fill="#bdbdbd"/></svg>
<svg style="left:0;top:0" width="1145" height="657" font-family="Liberation Sans, sans-serif"><rect x="671.5" y="152.60" width="364.5" height="15.95" fill="#4b6080"/><rect x="705.7" y="153.40" width="2.7" height="14.55" fill="#4b7be2"/><circle cx="1015.9" cy="160.97" r="3" fill="none" stroke="#c9c9c9" stroke-width="1"/><path d="M715 159.17 L718.2 162.38 L721.4 159.17" stroke="#c8d4e4" stroke-width="1.2" fill="none"/><rect x="729.30" y="154.17" width="13.6" height="13.6" fill="#ffffff" stroke="#262626" stroke-width="1"/><text x="747.4" y="164.07" font-size="8.7" fill="#dce4ee">Level 2</text><rect x="671.5" y="168.55" width="364.5" height="1" fill="#555555"/><rect x="705.7" y="170.15" width="2.7" height="14.55" fill="#4b7be2"/><circle cx="1015.9" cy="177.72" r="3" fill="none" stroke="#c9c9c9" stroke-width="1"/><path d="M733.5 174.72 L736.5 177.72 L733.5 180.72" stroke="#d0d0d0" stroke-width="1.2" fill="none"/><rect x="747.90" y="170.92" width="13.6" height="13.6" fill="#ffffff" stroke="#262626" stroke-width="1"/><text x="766" y="180.82" font-size="8.7" fill="#d2d2d2">&lt;Group&gt;</text><rect x="671.5" y="185.30" width="364.5" height="1" fill="#555555"/><rect x="705.7" y="186.90" width="2.7" height="14.55" fill="#4b7be2"/><circle cx="1015.9" cy="194.47" r="3" fill="none" stroke="#c9c9c9" stroke-width="1"/><path d="M733.5 191.47 L736.5 194.47 L733.5 197.47" stroke="#d0d0d0" stroke-width="1.2" fill="none"/><rect x="747.90" y="187.67" width="13.6" height="13.6" fill="#ffffff" stroke="#262626" stroke-width="1"/><text x="766" y="197.57" font-size="8.7" fill="#d2d2d2">Side lables</text><rect x="671.5" y="202.05" width="364.5" height="1" fill="#555555"/><rect x="705.7" y="203.65" width="2.7" height="14.55" fill="#4b7be2"/><circle cx="1015.9" cy="211.22" r="3" fill="none" stroke="#c9c9c9" stroke-width="1"/><path d="M733.5 208.22 L736.5 211.22 L733.5 214.22" stroke="#d0d0d0" stroke-width="1.2" fill="none"/><rect x="747.90" y="204.42" width="13.6" height="13.6" fill="#ffffff" stroke="#262626" stroke-width="1"/><text x="766" y="214.32" font-size="8.7" fill="#d2d2d2">Outline</text><rect x="671.5" y="218.80" width="364.5" height="1" fill="#555555"/><rect x="705.7" y="220.40" width="2.7" height="14.55" fill="#4b7be2"/><circle cx="1015.9" cy="227.97" r="3" fill="none" stroke="#c9c9c9" stroke-width="1"/><path d="M733.5 224.97 L736.5 227.97 L733.5 230.97" stroke="#d0d0d0" stroke-width="1.2" fill="none"/><rect x="747.90" y="221.17" width="13.6" height="13.6" fill="#ffffff" stroke="#262626" stroke-width="1"/><g transform="translate(747.90,221.17)"><path d="M2 4 L7 3 L5 9 Z" fill="#e8b04a" stroke="#d9574a" stroke-width="0.9"/></g><g transform="translate(747.90,221.17)"><path d="M6 4 L11 4 L12.5 9 L8 9.5 Z" fill="#9cc48c" stroke="#6aa85a" stroke-width="0.9"/></g><g transform="translate(747.90,221.17)"><path d="M2 3.5 H11" stroke="#d9574a" stroke-width="0.8" fill="none"/></g><text x="766" y="231.07" font-size="8.7" fill="#d2d2d2">Zones</text><rect x="671.5" y="235.55" width="364.5" height="1" fill="#555555"/><rect x="705.7" y="237.15" width="2.7" height="14.55" fill="#4b7be2"/><circle cx="1015.9" cy="244.72" r="3" fill="none" stroke="#c9c9c9" stroke-width="1"/><path d="M733.5 241.72 L736.5 244.72 L733.5 247.72" stroke="#d0d0d0" stroke-width="1.2" fill="none"/><rect x="747.90" y="237.92" width="13.6" height="13.6" fill="#ffffff" stroke="#262626" stroke-width="1"/><text x="766" y="247.82" font-size="8.7" fill="#d2d2d2">Skeleton</text><rect x="671.5" y="252.30" width="364.5" height="1" fill="#555555"/><rect x="705.7" y="253.90" width="2.7" height="14.55" fill="#4b7be2"/><circle cx="1015.9" cy="261.48" r="3" fill="none" stroke="#c9c9c9" stroke-width="1"/><path d="M733.5 258.48 L736.5 261.48 L733.5 264.48" stroke="#d0d0d0" stroke-width="1.2" fill="none"/><rect x="747.90" y="254.68" width="13.6" height="13.6" fill="#ffffff" stroke="#262626" stroke-width="1"/><g transform="translate(747.90,254.68)"><path d="M3 3 L4 3.5 M4.5 5 L5.5 5.5 M2.5 7 L3.5 7.5 M10 8 L11 8.5 M10.5 10.5 L11.5 11" stroke="#5a8a5a" stroke-width="1.1" fill="none"/></g><text x="766" y="264.58" font-size="8.7" fill="#d2d2d2">bookings</text><rect x="671.5" y="269.05" width="364.5" height="1" fill="#555555"/><rect x="705.7" y="270.65" width="2.7" height="14.55" fill="#4b7be2"/><circle cx="1015.9" cy="278.23" r="3" fill="none" stroke="#c9c9c9" stroke-width="1"/><path d="M733.5 275.23 L736.5 278.23 L733.5 281.23" stroke="#d0d0d0" stroke-width="1.2" fill="none"/><rect x="747.90" y="271.43" width="13.6" height="13.6" fill="#ffffff" stroke="#262626" stroke-width="1"/><text x="766" y="281.33" font-size="8.7" fill="#d2d2d2">tags</text><rect x="671.5" y="285.80" width="364.5" height="1" fill="#555555"/><rect x="705.7" y="287.40" width="2.7" height="14.55" fill="#4b7be2"/><circle cx="1015.9" cy="294.98" r="3" fill="none" stroke="#c9c9c9" stroke-width="1"/><path d="M733.5 291.98 L736.5 294.98 L733.5 297.98" stroke="#d0d0d0" stroke-width="1.2" fill="none"/><rect x="747.90" y="288.18" width="13.6" height="13.6" fill="#ffffff" stroke="#262626" stroke-width="1"/><g transform="translate(747.90,288.18)"><path d="M3 4 h1 M6 3 h1 M9 6 h1 M4 8 h1 M8 10 h1" stroke="#9aa8b4" stroke-width="1" fill="none"/></g><text x="766" y="298.08" font-size="8.7" fill="#d2d2d2">Signage</text><rect x="671.5" y="302.55" width="364.5" height="1" fill="#555555"/><rect x="705.7" y="304.15" width="2.7" height="14.55" fill="#4b7be2"/><circle cx="1015.9" cy="311.73" r="3" fill="none" stroke="#c9c9c9" stroke-width="1"/><path d="M733.5 308.73 L736.5 311.73 L733.5 314.73" stroke="#d0d0d0" stroke-width="1.2" fill="none"/><rect x="747.90" y="304.93" width="13.6" height="13.6" fill="#ffffff" stroke="#262626" stroke-width="1"/><text x="766" y="314.83" font-size="8.7" fill="#d2d2d2">area-02-closed</text><rect x="671.5" y="319.30" width="364.5" height="1" fill="#555555"/><rect x="705.7" y="320.90" width="2.7" height="14.55" fill="#4b7be2"/><circle cx="1015.9" cy="328.48" r="3" fill="none" stroke="#c9c9c9" stroke-width="1"/><path d="M733.5 325.48 L736.5 328.48 L733.5 331.48" stroke="#d0d0d0" stroke-width="1.2" fill="none"/><rect x="747.90" y="321.68" width="13.6" height="13.6" fill="#ffffff" stroke="#262626" stroke-width="1"/><g transform="translate(747.90,321.68)"><path d="M2 5 L5 2.5 L9 3 L11.5 8 L8 11 L3 9.5 Z" stroke="#555" stroke-width="0.9" fill="none"/></g><g transform="translate(747.90,321.68)"><path d="M4 6 L7 4.5 L9.5 8 L6.5 9.5 Z" stroke="#888" stroke-width="0.6" fill="#e8eef4"/></g><text x="766" y="331.58" font-size="8.7" fill="#d2d2d2">area-02-open</text><rect x="671.5" y="336.05" width="364.5" height="1" fill="#555555"/><rect x="705.7" y="337.65" width="2.7" height="14.55" fill="#4b7be2"/><circle cx="1015.9" cy="345.23" r="3" fill="none" stroke="#c9c9c9" stroke-width="1"/><path d="M733.5 342.23 L736.5 345.23 L733.5 348.23" stroke="#d0d0d0" stroke-width="1.2" fill="none"/><rect x="747.90" y="338.43" width="13.6" height="13.6" fill="#ffffff" stroke="#262626" stroke-width="1"/><g transform="translate(747.90,338.43)"><path d="M3 3 h1 M3 6 h1 M6 5 h1 M9 9 v2 M4 10 h1 M10 4 v1" stroke="#7fb0d8" stroke-width="1" fill="none"/></g><text x="766" y="348.33" font-size="8.7" fill="#d2d2d2">spaces</text><rect x="671.5" y="352.80" width="364.5" height="1" fill="#555555"/><rect x="705.7" y="354.40" width="2.7" height="14.55" fill="#4b7be2"/><circle cx="1015.9" cy="361.98" r="3" fill="none" stroke="#c9c9c9" stroke-width="1"/><path d="M733.5 358.98 L736.5 361.98 L733.5 364.98" stroke="#d0d0d0" stroke-width="1.2" fill="none"/><rect x="747.90" y="355.18" width="13.6" height="13.6" fill="#ffffff" stroke="#262626" stroke-width="1"/><g transform="translate(747.90,355.18)"><path d="M3 5 L5 7 M8 6 L9 7 M5 10 L7 9" stroke="#b8b8b8" stroke-width="0.8" fill="none"/></g><text x="766" y="365.08" font-size="8.7" fill="#d2d2d2">blanks</text><rect x="671.5" y="369.55" width="364.5" height="1" fill="#555555"/><rect x="705.7" y="371.15" width="2.7" height="14.55" fill="#4b7be2"/><circle cx="1015.9" cy="378.73" r="3" fill="none" stroke="#c9c9c9" stroke-width="1"/><path d="M733.5 375.73 L736.5 378.73 L733.5 381.73" stroke="#d0d0d0" stroke-width="1.2" fill="none"/><rect x="747.90" y="371.93" width="13.6" height="13.6" fill="#ffffff" stroke="#262626" stroke-width="1"/><g transform="translate(747.90,371.93)"><path d="M1.5 3.5 L10 3 L12 8 L9 11.5 L2.5 11 Z" fill="#c9dcea" stroke="none"/></g><text x="766" y="381.83" font-size="8.7" fill="#d2d2d2">bkr</text><rect x="671.5" y="386.30" width="364.5" height="1" fill="#555555"/><rect x="705.7" y="387.90" width="2.7" height="14.55" fill="#4b7be2"/><circle cx="1015.9" cy="395.48" r="3" fill="none" stroke="#c9c9c9" stroke-width="1"/><rect x="747.90" y="388.68" width="13.6" height="13.6" fill="#ffffff" stroke="#262626" stroke-width="1"/><text x="766" y="398.58" font-size="8.7" fill="#d2d2d2">&lt;Group&gt;</text><path d="M674 160.97 C676.5 156.97 681.5 156.97 684 160.97 C681.5 164.97 676.5 164.97 674 160.97 Z" fill="#d0d0d0"/><circle cx="679" cy="160.97" r="1.7" fill="#555"/><path d="M674 211.22 C676.5 207.22 681.5 207.22 684 211.22 C681.5 215.22 676.5 215.22 674 211.22 Z" fill="#d0d0d0"/><circle cx="679" cy="211.22" r="1.7" fill="#555"/><path d="M1030 152.6 L1036 152.6 L1036 158.6 Z" fill="#e8e8e8"/><rect x="671.5" y="403.05" width="364.5" height="1" fill="#555555"/></svg>
<div style="left:667px;top:632px;width:373px;height:1px;background:#474747;"></div>
<svg style="left:0;top:0" width="1145" height="657"><path d="M910 638 H906 V646.5 H914.5 V642.5" fill="none" stroke="#d0d0d0" stroke-width="1.2"/><path d="M910 642.5 L915.5 637 M912 637 H915.5 V640.5" fill="none" stroke="#d0d0d0" stroke-width="1.2"/><circle cx="932.5" cy="640.5" r="3" fill="none" stroke="#6a6a6a" stroke-width="1.2"/><path d="M930.5 642.5 L927 646" stroke="#6a6a6a" stroke-width="1.4"/><rect x="946.5" y="637.5" width="7.5" height="7.5" fill="none" stroke="#6a6a6a" stroke-width="1"/><rect x="948.5" y="639.5" width="3.5" height="3.5" fill="#6a6a6a"/><path d="M969 637.5 H978 V646.5 H969 Z" fill="#d0d0d0"/><path d="M965.5 637 V640.5 H970.5" fill="none" stroke="#d0d0d0" stroke-width="1.1"/><path d="M989 637 H998 V646.5 H989 Z" fill="#d0d0d0"/><path d="M989 641.5 H993 V646.5" fill="none" stroke="#4a4a4a" stroke-width="1"/><path d="M1010 639 H1018 V647 H1010 Z" fill="none" stroke="#6a6a6a" stroke-width="1"/><rect x="1012" y="637" width="4" height="2" fill="#6a6a6a"/></svg>
<div style="left:667px;top:649px;width:373px;height:1px;background:#353535;"></div>
<div style="left:666px;top:650px;width:375px;height:7px;background:#474747;"></div>
<svg style="left:0;top:0" width="1145" height="657" font-family="Liberation Sans, sans-serif"><text x="433.00" y="15.89" font-size="10.3" fill="#a0a0a0" letter-spacing="0.1">Adobe Illustrator CC 2019</text><text x="903.00" y="15.31" font-size="10.35" fill="#d6d6d6" font-weight="bold">Automation</text><text x="1013.00" y="15.08" font-size="9.16" fill="#6e6e6e">Search Adobe Stock</text><text x="9.60" y="42.46" font-size="9.1" fill="#c4c4c4" letter-spacing="-0.383">No Selection</text><text x="160.50" y="42.63" font-size="9.3" fill="#cbcbcb" letter-spacing="-0.28">Stroke:</text><text x="209.70" y="42.59" font-size="9.2" fill="#d0d0d0" letter-spacing="0.164">1 pt</text><text x="302.50" y="42.63" font-size="9.3" fill="#262626" letter-spacing="-0.222">Uniform</text><text x="402.80" y="42.59" font-size="9.2" fill="#262626" letter-spacing="-0.56">Basic</text><text x="446.80" y="42.63" font-size="9.3" fill="#cbcbcb" letter-spacing="-0.302">Opacity:</text><text x="486.50" y="42.59" font-size="9.2" fill="#d0d0d0" letter-spacing="-0.758">100%</text><text x="548.90" y="42.59" font-size="9.2" fill="#a8a8a8" letter-spacing="-0.385">Style:</text><text x="622.20" y="42.59" font-size="9.2" fill="#d4d4d4" letter-spacing="-0.345">Document Setup</text><text x="705.30" y="42.59" font-size="9.2" fill="#d4d4d4" letter-spacing="-0.455">Preferences</text><text x="50.20" y="67.04" font-size="8.5" fill="#e0e0e0" font-weight="bold">Level 2 Map (booking overlays)V6.svg* @ 16.67% (RGB/GPU Preview)</text><text x="36.00" y="660.58" font-size="8.6" fill="#bdbdbd">16.67%</text><text x="125.00" y="660.58" font-size="8.6" fill="#bdbdbd">1</text><text x="237.00" y="660.58" font-size="8.6" fill="#9a9a9a">Toggle Direct Selection</text><text x="1072.00" y="84.41" font-size="8.4" fill="#dedede" font-weight="bold">Actions</text><text x="1072.00" y="116.91" font-size="8.4" fill="#dedede" font-weight="bold">Links</text><text x="1072.00" y="139.21" font-size="8.4" fill="#dedede" font-weight="bold">Libraries</text><text x="1072.00" y="161.71" font-size="8.4" fill="#dedede" font-weight="bold">Document Info</text><text x="1072.00" y="193.81" font-size="8.4" fill="#dedede" font-weight="bold">Variables</text><text x="1072.00" y="216.61" font-size="8.4" fill="#dedede" font-weight="bold">Appearance</text><text x="1072.00" y="238.81" font-size="8.4" fill="#dedede" font-weight="bold">Asset Export</text><text x="1072.00" y="271.91" font-size="8.4" fill="#dedede" font-weight="bold">Layers</text><text x="1072.00" y="293.61" font-size="8.4" fill="#dedede" font-weight="bold">Artboards</text><text x="674.20" y="140.31" font-size="8.7" fill="#e2e2e2" font-weight="bold" letter-spacing="-0.342">Layers</text><text x="714.50" y="140.36" font-size="9.39" fill="#a4a4a4">Artboards</text><text x="671.00" y="645.38" font-size="8.6" fill="#cfcfcf">1 Layer</text></svg>
</div></body></html>
